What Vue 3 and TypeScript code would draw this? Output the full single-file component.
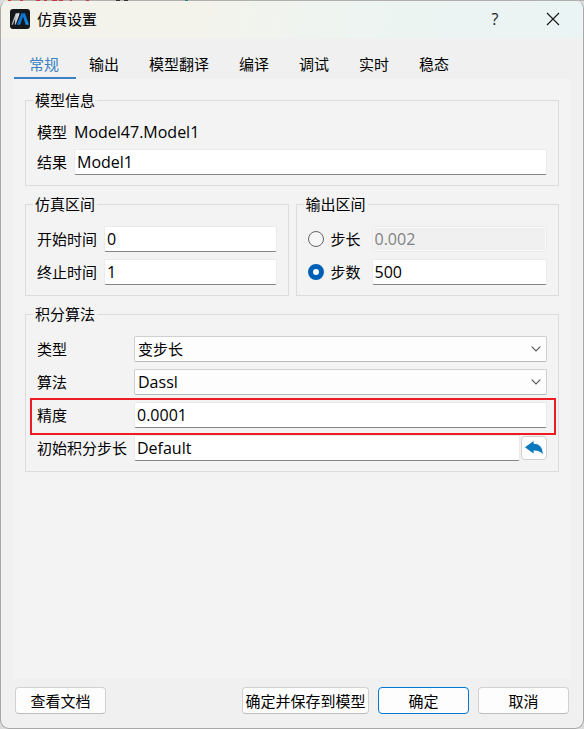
<script setup lang="ts">
import { ref } from 'vue'

const tabs: string[] = ['常规', '输出', '模型翻译', '编译', '调试', '实时', '稳态']
const activeTab = ref<string>('常规')
const result = ref<string>('Model1')
const startTime = ref<string>('0')
const stopTime = ref<string>('1')
const outputMode = ref<'length' | 'count'>('count')
const stepLength = ref<string>('0.002')
const stepCount = ref<string>('500')
const kind = ref<string>('变步长')
const solver = ref<string>('Dassl')
const tolerance = ref<string>('0.0001')
const initialStep = ref<string>('Default')

function resetStep(): void {
  initialStep.value = 'Default'
}
</script>

<template>
  <main class="window">
    <header class="titlebar">
      <svg class="logo" viewBox="0 0 20 20" aria-hidden="true">
        <defs>
          <linearGradient id="logo-blue" x1="0" y1="0" x2="1" y2="1">
            <stop offset="0" stop-color="#0b62bd" />
            <stop offset="1" stop-color="#1590f0" />
          </linearGradient>
          <linearGradient id="logo-grey" x1="0" y1="0" x2="1" y2="0">
            <stop offset="0" stop-color="#8d9295" />
            <stop offset="1" stop-color="#f0f1f2" />
          </linearGradient>
        </defs>
        <rect width="20" height="20" rx="3" fill="#15181b" />
        <path d="M1.300 15.800 5.800 4.200H9.600L8.800 7 5.600 15.800H4.800L5.200 10 2.900 15.800z" fill="url(#logo-grey)" />
        <path d="M6.900 15.800 11.300 4.200H15L19 15.800H15.700L13 7.600 10.100 15.800z" fill="url(#logo-blue)" />
      </svg>
      <h1>仿真设置</h1>
      <button class="caption help" type="button" aria-label="Help">?</button>
      <button class="caption close" type="button" aria-label="Close">
        <svg viewBox="0 0 14 14" width="14" height="14" aria-hidden="true">
          <path d="M1 1 13 13M13 1 1 13" stroke="#1a1a1a" stroke-width="1.2" fill="none" />
        </svg>
      </button>
    </header>

    <nav class="tabs" role="tablist">
      <button
        v-for="tab in tabs"
        :key="tab"
        type="button"
        role="tab"
        class="tab"
        :class="{ active: tab === activeTab }"
        :aria-selected="tab === activeTab"
        @click="activeTab = tab"
      >{{ tab }}</button>
    </nav>

    <section class="panel">
      <fieldset class="group">
        <legend>模型信息</legend>
        <div class="row info short">
          <span>模型</span>
          <span class="value">Model47.Model1</span>
        </div>
        <div class="row short">
          <label for="result">结果</label>
          <input id="result" v-model="result" class="text" type="text" />
        </div>
      </fieldset>

      <div class="pair">
        <fieldset class="group">
          <legend>仿真区间</legend>
          <div class="row medium">
            <label for="start">开始时间</label>
            <input id="start" v-model="startTime" class="text" type="text" />
          </div>
          <div class="row medium">
            <label for="stop">终止时间</label>
            <input id="stop" v-model="stopTime" class="text" type="text" />
          </div>
        </fieldset>

        <fieldset class="group">
          <legend>输出区间</legend>
          <div class="row choice">
            <label><input v-model="outputMode" type="radio" name="mode" value="length" />步长</label>
            <input v-model="stepLength" class="text" type="text" aria-label="步长" :disabled="outputMode !== 'length'" />
          </div>
          <div class="row choice">
            <label><input v-model="outputMode" type="radio" name="mode" value="count" />步数</label>
            <input v-model="stepCount" class="text" type="text" aria-label="步数" :disabled="outputMode !== 'count'" />
          </div>
        </fieldset>
      </div>

      <fieldset class="group">
        <legend>积分算法</legend>
        <div class="row long">
          <label for="kind">类型</label>
          <span class="combo">
            <select id="kind" v-model="kind" class="cjk">
              <option>变步长</option>
            </select>
            <svg viewBox="0 0 10 6" aria-hidden="true"><path d="M.7.7 5 5 9.3.7" /></svg>
          </span>
        </div>
        <div class="row long">
          <label for="solver">算法</label>
          <span class="combo">
            <select id="solver" v-model="solver">
              <option>Dassl</option>
            </select>
            <svg viewBox="0 0 10 6" aria-hidden="true"><path d="M.7.7 5 5 9.3.7" /></svg>
          </span>
        </div>
        <div class="row long marked">
          <label for="tolerance">精度</label>
          <input id="tolerance" v-model="tolerance" class="text" type="text" />
        </div>
        <div class="row long">
          <label for="initial">初始积分步长</label>
          <div class="with-reset">
            <input id="initial" v-model="initialStep" class="text" type="text" />
            <button class="reset" type="button" aria-label="Reset" @click="resetStep">
              <svg viewBox="0 0 18 14" width="18" height="14" aria-hidden="true">
                <path d="M0 6.200 8.600 0V2.800C14.200 2.800 17.600 6 17.800 13.300 15.500 10.200 12.800 9.200 8.600 9.400V12.400z" fill="#0a78bf" />
              </svg>
            </button>
          </div>
        </div>
      </fieldset>
    </section>

    <footer class="actions">
      <button class="btn" type="button">查看文档</button>
      <span class="spacer"></span>
      <button class="btn wide" type="button">确定并保存到模型</button>
      <button class="btn primary" type="button">确定</button>
      <button class="btn" type="button">取消</button>
    </footer>
  </main>
</template>

<style>
/* Sliver of the editor text that shows behind the dialog's top edge. */
body {
  background:
    linear-gradient(
      90deg,
      #dcdcdc 8px, #d8402f 8px 11px,
      #b3b0b0 11px 20px, #d03a3f 20px 23px,
      #b3b0b0 23px 36px, #c8383c 36px 40px,
      #b3b0b0 40px 44px, #c8383c 44px 47px,
      #b3b0b0 47px 52px, #c8383c 52px 57px,
      #b3b0b0 57px 59px, #c8383c 59px 63px,
      #b3b0b0 63px 70px, #c8383c 70px 72px,
      #b3b0b0 72px 86px, #c8383c 86px 89px,
      #b3b0b0 89px 116px, #333 116px 120px,
      #b3b0b0 120px 124px, #333 124px 128px,
      #b3b0b0 128px 185px, #2c8080 185px 188px,
      #b3b0b0 188px
    ) 0 0 / 100% 1px no-repeat,
    #dcdcdc;
}
</style>

<style scoped>
.window {
  box-sizing: border-box;
  min-height: 100vh;
  display: flex;
  flex-direction: column;
  border: 1px solid #a8a8a8;
  border-top-color: transparent;
  border-radius: 9px;
  overflow: hidden;
  background: #f0f0f0;
  background-clip: padding-box;
  color: #000;
  font: 15px/20px "Noto Sans CJK SC", sans-serif;
}

button,
input,
select {
  box-sizing: border-box;
  margin: 0;
  color: inherit;
  font: inherit;
}

.titlebar {
  box-sizing: border-box;
  display: flex;
  align-items: center;
  height: 37px;
  padding: 0 0 2px 9px;
  background: linear-gradient(100deg, #f3f3ec 0%, #f3f3ec 35%, #ecf4f2 68%, #ebf4f4 100%);
}

.logo {
  width: 20px;
  height: 20px;
}

h1 {
  flex: 1;
  margin: 0 0 0 7px;
  font-size: 15px;
  font-weight: 400;
}

.caption {
  width: 56px;
  height: 35px;
  padding: 0;
  display: grid;
  place-items: center;
  border: 0;
  background: none;
  color: #1a1a1a;
  font: 16px/20px "Open Sans", sans-serif;
}

.close {
  width: 60px;
}

.tabs {
  display: flex;
  height: 41px;
  padding-left: 13px;
}

.tab {
  position: relative;
  padding: 14px 15px 4px;
  border: 0;
  background: none;
}

.tab.active {
  color: #3a82c4;
}

.tab.active::after {
  content: "";
  position: absolute;
  left: 0;
  right: -2px;
  bottom: 0;
  height: 2px;
  background: #3a82c4;
}

.panel {
  flex: 1;
  display: flex;
  flex-direction: column;
  gap: 8px;
  margin: 0 13px;
  padding: 11px;
  background: #f3f3f3;
}

.pair {
  display: grid;
  grid-template-columns: 1fr 1fr;
  gap: 7px;
}

.group {
  min-width: 0;
  margin: 0;
  padding: 12px 11px 10px;
  border: 1px solid #dcdcdc;
}

legend {
  margin-left: -4px;
  padding: 0 2px;
}

.row {
  position: relative;
  display: grid;
  gap: 7px;
  align-items: center;
  height: 26px;
}

.row + .row {
  margin-top: 7px;
}

.row.info {
  height: 20px;
}

.short {
  grid-template-columns: 30px 1fr;
}

.medium {
  grid-template-columns: 60px 1fr;
}

.long {
  grid-template-columns: 90px 1fr;
}

.choice {
  grid-template-columns: 57px 1fr;
}

.choice label {
  display: flex;
  align-items: center;
  gap: 7px;
}

.value,
.text,
select {
  font-family: "Open Sans", "Noto Sans CJK SC", sans-serif;
  font-size: 16px;
}

.text {
  width: 100%;
  min-width: 0;
  height: 26px;
  padding: 0 2px;
  border: 1px solid #ebebeb;
  border-bottom-color: #868686;
  border-radius: 2px;
  background: #fff;
  outline: 0;
}

.text:disabled {
  border-color: #ebebeb;
  box-shadow: inset 0 0 0 1px #f9f9f9;
  background: #f0f0f0;
  color: #838383;
}

input[type="radio"] {
  appearance: none;
  width: 16px;
  height: 16px;
  border: 1px solid #666;
  border-radius: 50%;
  background: #f6f6f6;
}

input[type="radio"]:checked {
  border: 5px solid #005fb8;
  background: #fff;
}

.combo {
  position: relative;
  display: block;
  height: 26px;
}

.combo svg {
  position: absolute;
  right: 6px;
  top: 10px;
  width: 10px;
  height: 6px;
  fill: none;
  stroke: #555;
  stroke-width: 1.1;
  pointer-events: none;
}

select {
  appearance: none;
  width: 100%;
  height: 26px;
  padding: 0 20px 0 3px;
  border: 1px solid #cfcfcf;
  border-bottom-color: #b9b9b9;
  border-radius: 2px;
  background: #fdfdfd;
}

select.cjk {
  font-family: "Noto Sans CJK SC", sans-serif;
  font-size: 15px;
}

.marked::after {
  content: "";
  position: absolute;
  inset: -4px -9px -7px -7px;
  border: 2px solid #ed1c24;
  pointer-events: none;
}

.with-reset {
  display: flex;
  align-items: center;
  gap: 1px;
}

.reset {
  flex: none;
  display: grid;
  place-items: center;
  width: 26px;
  height: 24px;
  padding: 0;
  border: 1px solid #d0d0d0;
  border-radius: 4px;
  background: #fdfdfd;
}

.actions {
  display: flex;
  gap: 9px;
  padding: 8px 14px 14px;
}

.spacer {
  flex: 1;
}

.btn {
  width: 91px;
  height: 27px;
  padding: 0;
  border: 1px solid #d0d0d0;
  border-bottom-color: #bdbdbd;
  border-radius: 4px;
  background: #fdfdfd;
  white-space: nowrap;
}

.btn.wide {
  width: 127px;
}

.btn.primary {
  border-color: #0078d4;
}
</style>
